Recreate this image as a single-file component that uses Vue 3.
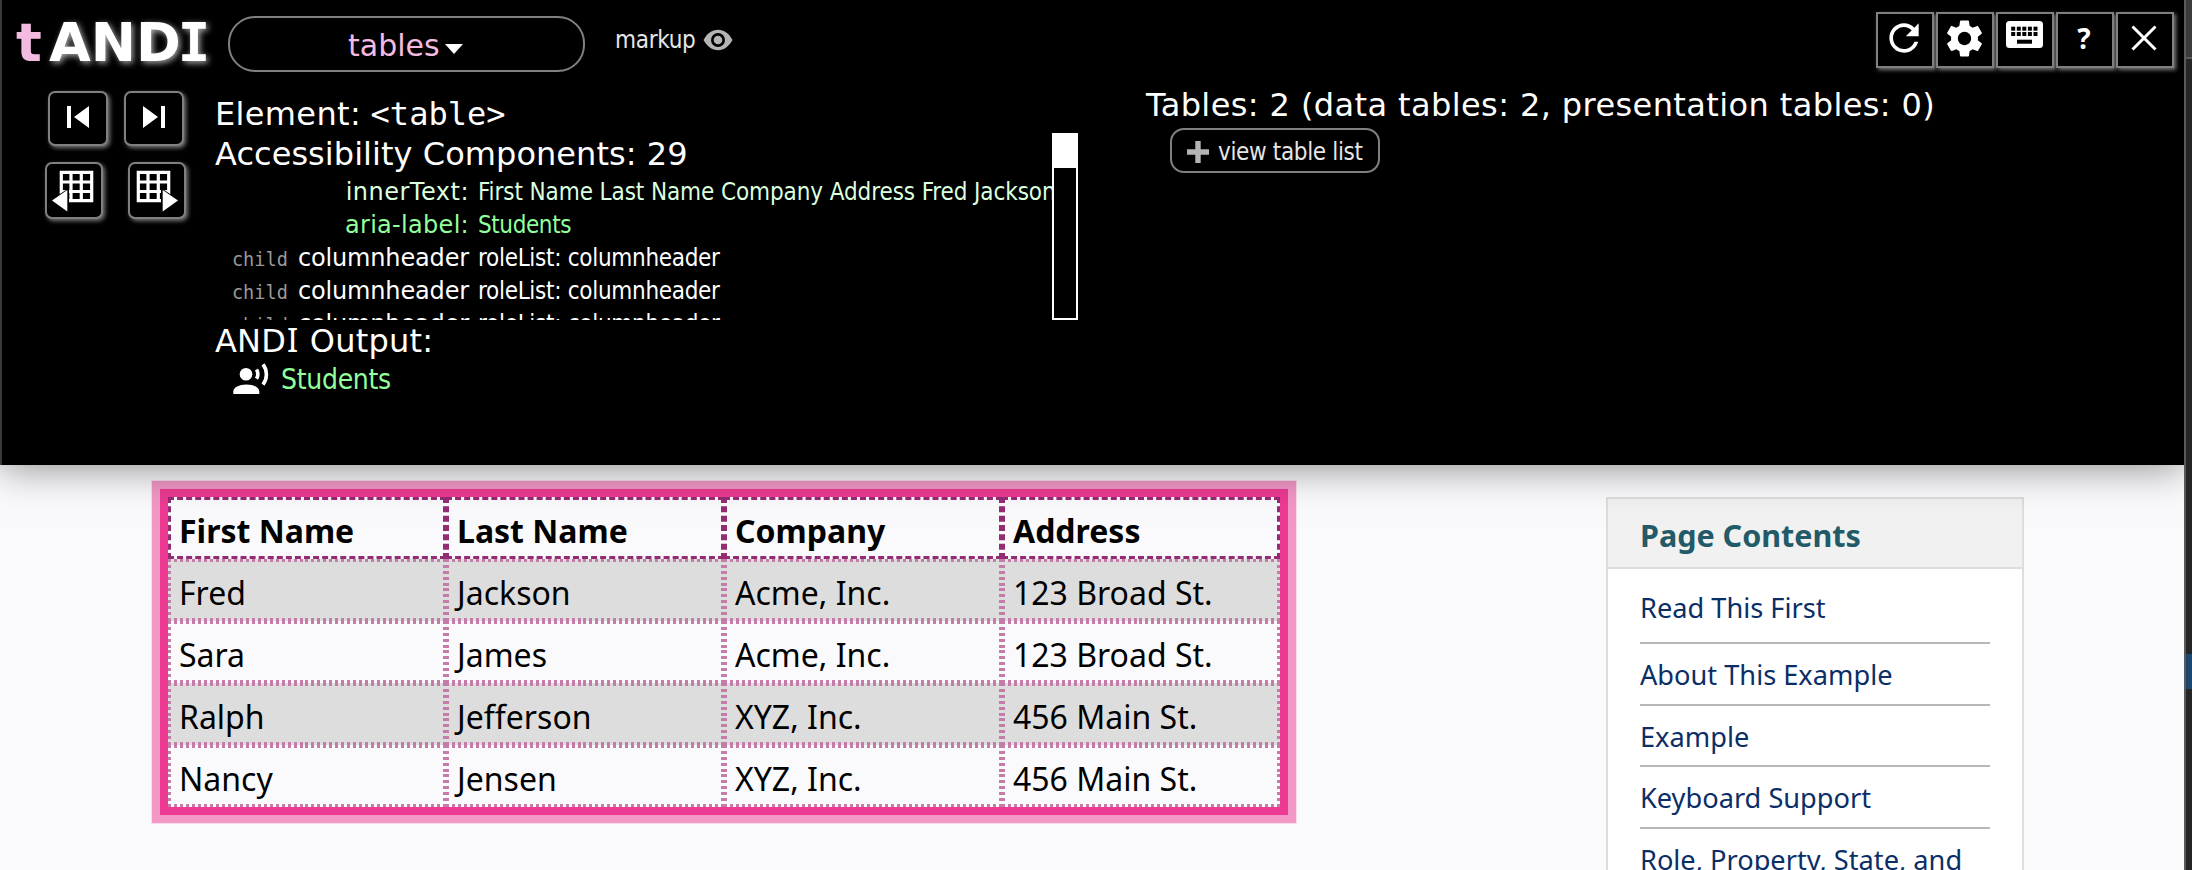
<script setup>
const columns = ['First Name', 'Last Name', 'Company', 'Address']
const students = [
  ['Fred', 'Jackson', 'Acme, Inc.', '123 Broad St.'],
  ['Sara', 'James', 'Acme, Inc.', '123 Broad St.'],
  ['Ralph', 'Jefferson', 'XYZ, Inc.', '456 Main St.'],
  ['Nancy', 'Jensen', 'XYZ, Inc.', '456 Main St.'],
]
const childRows = [1, 2, 3]
const contents = [
  'Read This First',
  'About This Example',
  'Example',
  'Keyboard Support',
  'Role, Property, State, and Tabindex Attributes',
]
const keyXs = [5.2, 10.8, 16.3, 21.9, 27.5]
</script>

<template>
  <div class="screen">
    <div class="page">
      <section class="andi">
        <header class="bar">
          <h1 class="logo"><span class="t">t</span><span class="name">AND<span class="serif-i">I</span></span></h1>
          <button class="module">
            <span>tables</span>
            <svg class="caret" width="18" height="10" viewBox="0 0 18 10"><path d="M0 0h18L9 10z" fill="#fff" /></svg>
          </button>
          <button class="markup">
            <span>markup</span>
            <svg width="30" height="22" viewBox="0 0 30 22">
              <path d="M.5 11C4 4.500 9 .8 15 .8S26 4.500 29.500 11C26 17.500 21 21.200 15 21.200S4 17.500 .5 11z" fill="#b4b4b4" />
              <circle cx="15" cy="11" r="7" fill="#000" />
              <circle cx="15" cy="11" r="4.300" fill="#b4b4b4" />
            </svg>
          </button>
          <div class="tools">
            <button class="tool">
              <svg width="44" height="44" viewBox="0 0 24 24"><path fill="#fff" d="M17.650 6.350C16.200 4.900 14.210 4 12 4c-4.420 0-7.990 3.580-7.990 8s3.570 8 7.990 8c3.730 0 6.840-2.550 7.730-6h-2.080c-.82 2.330-3.040 4-5.650 4-3.310 0-6-2.690-6-6s2.690-6 6-6c1.660 0 3.140.69 4.220 1.780L13 11h7V4l-2.350 2.350z" /></svg>
            </button>
            <button class="tool">
              <svg width="43" height="43" viewBox="0 0 24 24"><path fill="#fff" d="M19.430 12.980c.04-.32.07-.64.07-.98s-.03-.66-.07-.98l2.110-1.650c.19-.15.24-.42.12-.64l-2-3.460c-.12-.22-.39-.3-.61-.22l-2.490 1c-.52-.4-1.080-.73-1.690-.98l-.38-2.650C14.460 2.180 14.250 2 14 2h-4c-.25 0-.46.18-.49.42l-.38 2.650c-.61.25-1.170.59-1.690.98l-2.490-1c-.23-.09-.49 0-.61.22l-2 3.460c-.13.22-.07.49.12.64l2.110 1.650c-.04.32-.07.65-.07.98s.03.66.07.98l-2.110 1.650c-.19.15-.24.42-.12.64l2 3.460c.12.22.39.3.61.22l2.490-1c.52.4 1.080.73 1.690.98l.38 2.650c.03.24.24.42.49.42h4c.25 0 .46-.18.49-.42l.38-2.650c.61-.25 1.170-.59 1.690-.98l2.490 1c.23.09.49 0 .61-.22l2-3.460c.12-.22.07-.49-.12-.64l-2.110-1.650zM12 15.700c-2.040 0-3.700-1.660-3.700-3.700s1.660-3.700 3.700-3.700 3.700 1.660 3.700 3.700-1.660 3.700-3.700 3.700z" /></svg>
            </button>
            <button class="tool">
              <svg class="keyboard" width="37" height="27" viewBox="0 0 37 27">
                <rect x="0" y="0" width="37" height="27" rx="3.500" fill="#fff" />
                <g fill="#000">
                  <rect v-for="x in keyXs" :key="'a' + x" :x="x" y="5.700" width="4" height="4" />
                  <rect v-for="x in keyXs" :key="'b' + x" :x="x" y="11" width="4" height="4" />
                  <rect x="11" y="18.700" width="15" height="4" />
                </g>
              </svg>
            </button>
            <button class="tool help">?</button>
            <button class="tool">
              <svg width="26" height="26" viewBox="0 0 26 26"><path d="M1.500 1.500l23 23M24.500 1.500l-23 23" stroke="#fff" stroke-width="3" /></svg>
            </button>
          </div>
        </header>

        <div class="body">
          <nav class="nav">
            <div class="nav-row">
              <button class="nav-btn">
                <svg width="24" height="24" viewBox="0 0 24 24" fill="#fff"><path d="M1 1h4v22H1zM23 1v22L8 12z" /></svg>
              </button>
              <button class="nav-btn">
                <svg width="24" height="24" viewBox="0 0 24 24" fill="#fff"><path d="M19 1h4v22h-4zM1 1v22l15-11z" /></svg>
              </button>
            </div>
            <div class="nav-row grid-row">
              <button class="nav-btn narrow prev">
                <svg width="42" height="42" viewBox="0 0 42 42">
                  <path d="M10.300 2.300H40.700V30.700H10.300zM10.300 12H40.700M10.300 21.500H40.700M20 2V31M30.300 2V31" fill="none" stroke="#fff" stroke-width="3.200" />
                  <path d="M18 18v24L-1 30.500z" fill="#000" />
                  <path d="M16.300 20v21.500L1 30.500z" fill="#fff" />
                </svg>
              </button>
              <button class="nav-btn narrow next">
                <svg width="42" height="42" viewBox="0 0 42 42">
                  <path d="M2.300 2.300H32.700V30.700H2.300zM2.300 12H32.700M2.300 21.500H32.700M12 2V31M22.300 2V31" fill="none" stroke="#fff" stroke-width="3.200" />
                  <path d="M25 18v24L44 30.500z" fill="#000" />
                  <path d="M26.700 20v21.500L42 30.500z" fill="#fff" />
                </svg>
              </button>
            </div>
          </nav>

          <div class="inspect">
            <h2 class="heading element">Element: <code>&lt;table&gt;</code></h2>
            <h2 class="heading components">Accessibility Components: 29</h2>
            <div class="comp-wrap">
              <div class="comp-table">
                <div class="comp inner">
                  <span class="key wide">innerText:</span>
                  <span class="val fit">First Name Last Name Company Address Fred Jackson</span>
                </div>
                <div class="comp aria">
                  <span class="key">aria-label:</span>
                  <span class="val label">Students</span>
                </div>
                <div v-for="n in childRows" :key="n" class="comp">
                  <span class="key role"><small>child</small>columnheader</span>
                  <span class="val">roleList: columnheader</span>
                </div>
              </div>
              <div class="scroll"><div class="thumb"></div></div>
            </div>
            <h2 class="heading output">AND<span class="i">I</span> Output:</h2>
            <div class="speech">
              <svg width="37" height="32" viewBox="0 0 37 32">
                <circle cx="13" cy="11.300" r="6.300" fill="#fff" />
                <path d="M.3 31v-2.500C.3 24.500 6 21.500 13.300 21.500S26.300 24.500 26.300 28.500V31z" fill="#fff" />
                <path d="M23.500 6.500a9 9 0 0 1 0 9.300" fill="none" stroke="#fff" stroke-width="3.600" />
                <path d="M30 1.300a17 17 0 0 1 0 20.400" fill="none" stroke="#fff" stroke-width="3.600" />
              </svg>
              <span>Students</span>
            </div>
          </div>

          <div class="summary">
            <h2 class="heading tables">Tables: 2 (data tables: 2, presentation tables: 0)</h2>
            <button class="view-list">
              <svg width="22" height="22" viewBox="0 0 22 22"><path d="M11 0v22M0 11h22" stroke="#b4b4b4" stroke-width="5.400" /></svg>
              <span>view table list</span>
            </button>
          </div>
        </div>
      </section>

      <main class="content">
        <table class="students" aria-label="Students">
          <thead>
            <tr><th v-for="c in columns" :key="c">{{ c }}</th></tr>
          </thead>
          <tbody>
            <tr v-for="row in students" :key="row[0]">
              <td v-for="(cell, i) in row" :key="i">{{ cell }}</td>
            </tr>
          </tbody>
        </table>
        <aside class="toc">
          <h2>Page Contents</h2>
          <ul>
            <li v-for="item in contents" :key="item"><a>{{ item }}</a></li>
          </ul>
        </aside>
      </main>
    </div>
    <div class="devtools">
      <div class="dev-top"></div>
      <div class="dev-gap"></div>
      <div class="dev-sel"></div>
    </div>
  </div>
</template>

<style>
body {
  margin: 0;
  overflow: hidden;
}
</style>

<style scoped>
.screen {
  display: flex;
  width: 2192px;
  height: 870px;
  overflow: hidden;
  background: #fafafc;
}
.screen * {
  box-sizing: border-box;
}
button {
  padding: 0;
  margin: 0;
  background: #000;
  color: #fff;
  display: flex;
  align-items: center;
  flex: none;
}
svg {
  display: block;
  flex: none;
  overflow: visible;
}
h1,
h2,
ul {
  margin: 0;
  padding: 0;
}
.page {
  width: 2184px;
  height: 870px;
  overflow: hidden;
}
.andi {
  position: relative;
  z-index: 1;
  height: 465px;
  background: #000;
  color: #fff;
  border-left: 2px solid #3a3a3a;
  box-shadow: 0 0 40px rgba(0, 0, 0, 0.5);
  font-family: "DejaVu Sans", Verdana, sans-serif;
}
.bar {
  display: flex;
  align-items: flex-start;
  height: 91px;
}
.logo {
  width: 226px;
  padding-left: 14px;
  font-size: 54px;
  line-height: 64px;
  padding-top: 11px;
  font-weight: 700;
  white-space: nowrap;
}
.logo .t {
  display: inline-block;
  width: 33px;
  color: #f4bbe0;
}
.logo .name {
  text-shadow: 2px 2px 6px #aaa;
}
.logo .serif-i {
  font-family: "DejaVu Sans Mono", monospace;
  margin-left: -3px;
}
.module {
  width: 357px;
  height: 56px;
  margin-top: 16px;
  border: 2px solid #808080;
  border-radius: 27px;
  padding: 4px 0 0 118px;
  font: 30px/50px "DejaVu Sans", sans-serif;
  color: #f4bbe0;
}
.caret {
  margin: 5px 0 0 5px;
}
.markup {
  border: 0;
  margin: 23px 0 0 30px;
  font: 24px/32px "DejaVu Sans Condensed", sans-serif;
  letter-spacing: -0.3px;
  color: #e6e6e6;
  gap: 7px;
}
.markup span {
  padding-top: 1px;
}
.tools {
  display: flex;
  gap: 2px;
  margin: 12px 10px 0 auto;
}
.tool {
  width: 58px;
  height: 56px;
  border: 2px solid #808080;
  justify-content: center;
  box-shadow: 2px 2px 4px #777;
  padding: 0 2px 4px 0;
}
.keyboard {
  margin-top: -7px;
}
.help {
  font: 700 28px/40px "Noto Sans", sans-serif;
}
.body {
  display: flex;
}
.nav {
  width: 213px;
  padding-left: 43px;
}
.nav-row {
  display: flex;
  gap: 16px;
  padding-left: 3px;
}
.grid-row {
  gap: 25px;
  padding: 0;
  margin-top: 16px;
}
.nav-btn {
  width: 60px;
  height: 55px;
  border: 2px solid #808080;
  border-radius: 7px;
  justify-content: center;
  box-shadow: 2px 2px 4px #777;
  padding-bottom: 3px;
}
.narrow {
  width: 58px;
  height: 57px;
  padding: 1px 0 0;
}
.prev {
  padding-right: 5px;
}
.next {
  padding-right: 1px;
}
.heading {
  font-weight: 400;
  font-size: 32px;
  line-height: 40px;
  height: 40px;
  white-space: nowrap;
}
.inspect {
  width: 865px;
  padding-top: 3px;
}
.element {
  letter-spacing: 0.35px;
}
.element code {
  font: 32px/40px "DejaVu Sans Mono", monospace;
  letter-spacing: 0;
  margin-left: -1px;
}
.components {
  letter-spacing: 0.05px;
}
.comp-wrap {
  display: flex;
  align-items: flex-end;
  height: 187px;
  margin-top: -41px;
}
.comp-table {
  width: 837px;
  height: 146px;
  overflow: hidden;
  padding-top: 2px;
}
.comp {
  display: flex;
  height: 33px;
  line-height: 33px;
  font-size: 24px;
  white-space: nowrap;
}
.inner {
  color: #dbffdf;
}
.aria {
  color: #90ff9c;
}
.key {
  width: 254px;
  text-align: right;
  flex: none;
  letter-spacing: 0.3px;
}
.key.wide {
  letter-spacing: 0.5px;
}
.key.role {
  letter-spacing: -0.15px;
}
.key small {
  font: 18.600px "DejaVu Sans Mono", monospace;
  color: #999;
  margin-right: 10px;
  letter-spacing: 0;
}
.val {
  font-family: "DejaVu Sans Condensed", sans-serif;
  letter-spacing: -0.3px;
  padding-left: 9px;
}
.val.fit {
  letter-spacing: -0.1px;
}
.val.label {
  letter-spacing: -0.4px;
}
.scroll {
  width: 26px;
  height: 187px;
  border: 2px solid #fff;
}
.thumb {
  height: 33px;
  background: #fff;
}
.output {
  letter-spacing: 0.2px;
  margin-top: 1px;
}
.output .i {
  font-family: "Noto Sans", sans-serif;
  font-size: 33px;
  line-height: 1;
  margin: 0 1px 0 1px;
}
.speech {
  display: flex;
  align-items: center;
  height: 36px;
  padding-left: 18px;
  gap: 11px;
  font: 28px/36px "DejaVu Sans Condensed", sans-serif;
  letter-spacing: -0.3px;
  color: #90ff9c;
}
.speech span {
  padding-top: 1px;
}
.summary {
  padding-left: 66px;
}
.tables {
  height: 37px;
  line-height: 29px;
  letter-spacing: 0.4px;
}
.view-list {
  width: 210px;
  height: 45px;
  margin-left: 24px;
  border: 2px solid #808080;
  border-radius: 14px;
  padding: 2px 0 0 15px;
  gap: 9px;
  color: #e6e6e6;
  font: 24px/38px "DejaVu Sans Condensed", sans-serif;
  letter-spacing: -0.35px;
}
.content {
  display: flex;
  justify-content: space-between;
  align-items: flex-start;
  padding: 32px 160px 0 168px;
  font-family: "Noto Sans", sans-serif;
}
.students {
  width: 1112px;
  table-layout: fixed;
  border-spacing: 0;
  font-size: 32px;
  color: #000;
  box-shadow: 0 0 0 8px #ec3a93, 0 0 0 16px #f297c6, 0 0 0 17px #fadcec;
}
th,
td {
  height: 62px;
  padding: 6px 0 0 11px;
  text-align: left;
  line-height: 50px;
  white-space: nowrap;
}
th {
  border: 3px dashed #942c74;
  padding: 6px 0 0 8px;
  line-height: 48px;
  background: #fafafc;
}
td {
  --dot-x: repeating-linear-gradient(90deg, #c47ca8 0 3px, transparent 3px 5.978px);
  --dot-y: repeating-linear-gradient(180deg, #c47ca8 0 3px, transparent 3px 5.900px);
  background-color: #fafafc;
  background-image: var(--dot-x), var(--dot-x), var(--dot-y), var(--dot-y);
  background-size: 100% 3px, 100% 3px, 3px 100%, 3px 100%;
  background-position: left top, left bottom, left top, right top;
  background-repeat: no-repeat;
}
tbody tr:nth-child(odd) td {
  background-color: #ddd;
}
.toc {
  width: 418px;
  height: 420px;
  border: 2px solid #ddd;
  background: #fff;
}
.toc h2 {
  height: 70px;
  border-bottom: 2px solid #ddd;
  background: #f1f1f1;
  color: #235a68;
  padding: 3px 0 0 32px;
  font-size: 30.500px;
  line-height: 66px;
}
.toc ul {
  list-style: none;
  margin: 7px 32px 0;
}
.toc li {
  height: 62px;
  padding-top: 12px;
  line-height: 37px;
  font-size: 27.200px;
  color: #0b2e66;
  border-bottom: 2px solid #b8b8b8;
}
.toc li:nth-child(1) {
  height: 68px;
  padding-top: 13px;
}
.toc li:nth-child(3) {
  height: 61px;
}
.devtools {
  width: 8px;
  border-left: 2px solid #5a5a5a;
  background: #262626;
}
.dev-top {
  height: 59px;
  background: #3b3b3b;
  border-bottom: 2px solid #5a5a5a;
}
.dev-gap {
  height: 595px;
}
.dev-sel {
  height: 35px;
  background: #1c4670;
}
</style>
